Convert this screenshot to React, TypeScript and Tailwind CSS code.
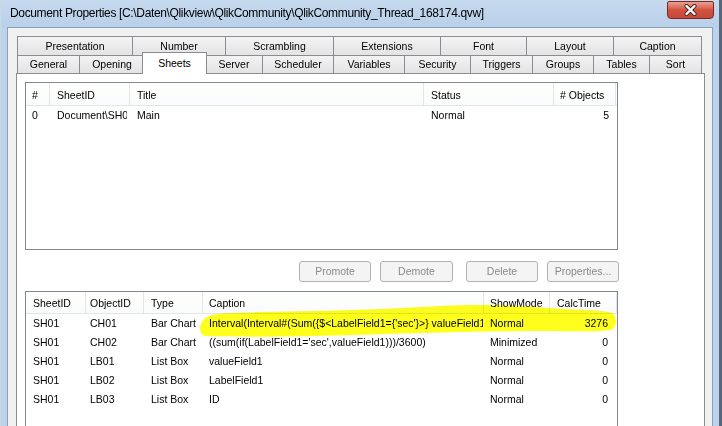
import React from 'react';

type Tab = { label: string; w: string; selected?: boolean };

const backRow: Tab[] = [
  { label: 'Presentation', w: 'w-[115px]' },
  { label: 'Number', w: 'w-[93px]' },
  { label: 'Scrambling', w: 'w-[108px]' },
  { label: 'Extensions', w: 'w-[107px]' },
  { label: 'Font', w: 'w-[86px]' },
  { label: 'Layout', w: 'w-[87px]' },
  { label: 'Caption', w: 'w-[89px]' },
];

const frontRow: Tab[] = [
  { label: 'General', w: 'w-[62px]' },
  { label: 'Opening', w: 'w-[65px]' },
  { label: 'Sheets', w: 'w-[65px]', selected: true },
  { label: 'Server', w: 'w-[57px]' },
  { label: 'Scheduler', w: 'w-[71px]' },
  { label: 'Variables', w: 'w-[71px]' },
  { label: 'Security', w: 'w-[66px]' },
  { label: 'Triggers', w: 'w-[62px]' },
  { label: 'Groups', w: 'w-[61px]' },
  { label: 'Tables', w: 'w-[56px]' },
  { label: 'Sort', w: 'w-[53px]' },
];

type Col = { label: string; cls: string; right?: boolean };

const sheetCols: Col[] = [
  { label: '#', cls: 'w-[24px] pl-[6px]' },
  { label: 'SheetID', cls: 'w-[80px] pl-[7px] pr-[3px]' },
  { label: 'Title', cls: 'w-[294px] pl-[7px]' },
  { label: 'Status', cls: 'w-[130px] pl-[7px]' },
  { label: '# Objects', cls: 'w-[62px] pl-[6px] pr-[7px]', right: true },
];

const sheetRows = [['0', 'Document\\SH01', 'Main', 'Normal', '5']];

const objectCols: Col[] = [
  { label: 'SheetID', cls: 'w-[60px] pl-[7px]' },
  { label: 'ObjectID', cls: 'w-[58px] pl-[4px]' },
  { label: 'Type', cls: 'w-[59px] pl-[7px]' },
  { label: 'Caption', cls: 'w-[281px] pl-[6px] pr-[1px]' },
  { label: 'ShowMode', cls: 'w-[66px] pl-[6px]' },
  { label: 'CalcTime', cls: 'w-[67px] pl-[7px] pr-[9px]', right: true },
];

const objectRows = [
  ['SH01', 'CH01', 'Bar Chart', "Interval(Interval#(Sum({$<LabelField1={'sec'}>} valueField1),'s'),'hh:mm:ss')", 'Normal', '3276'],
  ['SH01', 'CH02', 'Bar Chart', "((sum(if(LabelField1='sec',valueField1)))/3600)", 'Minimized', '0'],
  ['SH01', 'LB01', 'List Box', 'valueField1', 'Normal', '0'],
  ['SH01', 'LB02', 'List Box', 'LabelField1', 'Normal', '0'],
  ['SH01', 'LB03', 'List Box', 'ID', 'Normal', '0'],
];

function TabRow({ tabs, height }: { tabs: Tab[]; height: string }) {
  return (
    <div className={`flex items-start ${height}`}>
      {tabs.map((t, i) =>
        t.selected ? (
          <div
            key={t.label}
            className={`${t.w} -mx-[2px] -mt-[3px] h-[22px] relative z-10 flex items-center justify-center bg-white border border-b-0 border-[#898c95]`}
          >
            {t.label}
          </div>
        ) : (
          <div
            key={t.label}
            className={`${t.w} h-full flex items-center justify-center pt-[1px] border-t border-l border-[#898c95] bg-linear-to-b from-[#f3f3f3] to-[#e3e3e3] ${i === tabs.length - 1 ? 'border-r' : ''}`}
          >
            {t.label}
          </div>
        )
      )}
    </div>
  );
}

function ListView({ cols, rows, header, height }: { cols: Col[]; rows: string[][]; header: string; height: string }) {
  return (
    <div className={`w-[593px] ${height} border border-[#828790] bg-white`}>
      <div className={`flex ${header} border-b border-[#e5e5e5] bg-linear-to-b from-white to-[#fafbfc]`}>
        {cols.map((c) => (
          <div key={c.label} className={`${c.cls} shrink-0 flex items-center pt-[3px] border-r border-[#e5e5e5] whitespace-nowrap`}>
            {c.label}
          </div>
        ))}
      </div>
      {rows.map((r, ri) => (
        <div key={ri} className="flex h-[19px]">
          {r.map((v, ci) => (
            <div key={ci} className={`${cols[ci].cls} shrink-0 flex items-center`}>
              <div className={`w-full overflow-hidden whitespace-nowrap ${cols[ci].right ? 'text-right' : ''}`}>{v}</div>
            </div>
          ))}
        </div>
      ))}
    </div>
  );
}

function Button({ label, cls }: { label: string; cls: string }) {
  return (
    <div className={`${cls} h-[21px] flex items-center justify-center rounded-[3px] border border-[#adb2b5] bg-[#f4f4f4] text-[#8a8a8a]`}>
      {label}
    </div>
  );
}

export default function App() {
  return (
    <div className="relative w-[722px] h-[426px] overflow-hidden bg-[#bcd3eb] border-l border-l-[#cbd8e6] border-r-[3px] border-r-[#56677c] font-['Liberation_Sans',Arial,sans-serif] text-[10.5px] text-black">
      {/* title bar */}
      <div className="h-[27px] flex items-start bg-linear-to-b from-[#c6daef] to-[#b9d0ea]">
        <div className="pl-[9px] pt-[5px] text-[12px] leading-[16px] tracking-[-0.35px] whitespace-nowrap">
          Document Properties [C:\Daten\Qlikview\QlikCommunity\QlikCommunity_Thread_168174.qvw]
        </div>
        <div className="ml-auto mr-[5px] mt-[1px] w-[47px] h-[18px] flex items-center justify-center rounded-t-[2px] rounded-b-[4px] border border-[#7a2a22] bg-linear-to-b from-[#e9a093] via-[#d0523f] to-[#c7473a]">
          <svg width="15" height="12" viewBox="0 0 15 12">
            <path d="M3.5 2 L11.5 10 M11.5 2 L3.5 10" stroke="#4a2520" strokeWidth="4.2" strokeLinecap="round" />
            <path d="M3.5 2 L11.5 10 M11.5 2 L3.5 10" stroke="#ffffff" strokeWidth="2.4" strokeLinecap="round" />
          </svg>
        </div>
      </div>

      {/* client area */}
      <div className="ml-[6px] w-[706px] h-[399px] bg-[#f0f0f0] border-l border-t border-r border-[#8aa1bb] pl-[8px] pt-[8px]">
        <div className="ml-[1px]">
          <TabRow tabs={backRow} height="h-[19px]" />
          <TabRow tabs={frontRow} height="h-[18px]" />
        </div>

        <div className="w-[689px] h-[360px] border border-[#898c95] bg-white pl-[8px] pt-[8px]">
          <ListView cols={sheetCols} rows={sheetRows} header="h-[23px]" height="h-[168px]" />

          <div className="flex mt-[11px]">
            <Button label="Promote" cls="ml-[274px] w-[72px]" />
            <Button label="Demote" cls="ml-[9px] w-[73px]" />
            <Button label="Delete" cls="ml-[13px] w-[72px]" />
            <Button label="Properties..." cls="ml-[9px] w-[72px]" />
          </div>

          <div className="mt-[9px]">
            <ListView cols={objectCols} rows={objectRows} header="h-[22px]" height="h-[160px]" />
          </div>
        </div>
      </div>

      {/* marker highlight drawn over the first object row */}
      <svg className="pointer-events-none absolute left-0 top-0 mix-blend-multiply" width="722" height="426" viewBox="0 0 722 426">
        <path
          d="M206,317 C212,313 230,313 260,312 C330,311 390,309 440,306 C480,304 510,305 545,308 C580,310 603,310 611,313 C617,317 616,327 610,330 C600,332 570,331 540,331 C480,331 420,333 350,335 C290,337 240,337 205,336 C196,335 198,321 206,317 Z"
          fill="#ffff1e"
        />
      </svg>
    </div>
  );
}
